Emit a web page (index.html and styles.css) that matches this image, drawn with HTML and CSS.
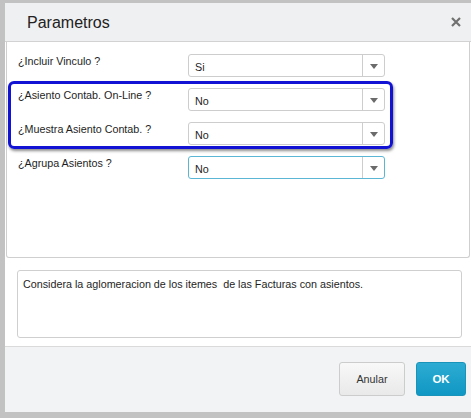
FILE: index.html
```html
<!DOCTYPE html>
<html lang="es">
<head>
<meta charset="utf-8">
<title>Parametros</title>
<link rel="stylesheet" href="styles.css">
</head>
<body>
<div class="dialog">
  <div class="header">
    <span class="title">Parametros</span>
    <svg class="close" width="10" height="10" viewBox="0 0 10 10"><path d="M1 1L9 9M9 1L1 9" stroke="#707070" stroke-width="2.2" fill="none"/></svg>
  </div>
  <div class="panel">
    <div class="row">
      <label class="label">¿Incluir Vinculo ?</label>
      <div class="select"><span class="value">Si</span><span class="arrow"><i class="tri"></i></span></div>
    </div>
    <div class="row">
      <label class="label">¿Asiento Contab. On-Line ?</label>
      <div class="select"><span class="value">No</span><span class="arrow"><i class="tri"></i></span></div>
    </div>
    <div class="row">
      <label class="label">¿Muestra Asiento Contab. ?</label>
      <div class="select"><span class="value">No</span><span class="arrow"><i class="tri"></i></span></div>
    </div>
    <div class="row">
      <label class="label">¿Agrupa Asientos ?</label>
      <div class="select focus"><span class="value">No</span><span class="arrow"><i class="tri"></i></span></div>
    </div>
    <div class="highlight"></div>
  </div>
  <div class="help">Considera la aglomeracion de los itemes&nbsp; de las Facturas con asientos.</div>
  <div class="footer">
    <button class="btn cancel">Anular</button>
    <button class="btn ok">OK</button>
  </div>
</div>
</body>
</html>
```

FILE: styles.css
```css
html, body {
  margin: 0;
  padding: 0;
}
body {
  background: #c2c2c2;
  font-family: "Liberation Sans", Arial, sans-serif;
  font-size: 10.75px;
  color: #1e1e1e;
  width: 471px;
  height: 418px;
  overflow: hidden;
}
.dialog {
  margin: 3px 0 0 5px;
  width: 466px;
  height: 409px;
  background: #fff;
  display: flex;
  flex-direction: column;
}
.header {
  height: 38px;
  flex: none;
  background: #eff0f1;
  border-bottom: 1px solid #d2d2d2;
  display: flex;
  align-items: center;
  padding-left: 22px;
  padding-right: 10px;
}
.title {
  font-size: 16px;
  color: #222;
  flex: 1;
  padding-top: 1px;
}
.close {
  margin-top: -1px;
}
.panel {
  position: relative;
  flex: none;
  height: 203px;
  margin: 0 1px;
  border: 1px solid #cfcfcf;
  border-top: none;
  border-radius: 0 0 3px 3px;
  padding: 12px 0 0 11px;
  display: flex;
  flex-direction: column;
  gap: 11px;
}
.row {
  display: flex;
  align-items: flex-start;
}
.label {
  width: 170px;
  flex: none;
  line-height: 14px;
  margin-top: 0;
}
.select {
  width: 195px;
  height: 21px;
  border: 1px solid #cdcdcd;
  border-radius: 3px;
  display: flex;
  align-items: center;
  background: #fff;
}
.select.focus {
  border-color: #5ab6d4;
}
.value {
  flex: 1;
  padding-left: 6px;
  padding-top: 2px;
}
.arrow {
  width: 21px;
  height: 21px;
  border-left: 1px solid #cdcdcd;
  display: flex;
  align-items: center;
  justify-content: center;
}
.tri {
  width: 0;
  height: 0;
  border-left: 4px solid transparent;
  border-right: 4px solid transparent;
  border-top: 5px solid #6b6b6b;
  margin-top: 1px;
}
.highlight {
  position: absolute;
  left: 1px;
  top: 39px;
  width: 379px;
  height: 62px;
  border: 3px solid #1212d4;
  border-radius: 6px;
  box-shadow: 1px 2px 3px rgba(0, 0, 0, 0.45);
  pointer-events: none;
}
.help {
  flex: none;
  margin: 12px 0 0 12px;
  width: 434px;
  height: 58px;
  border: 1px solid #cfcfcf;
  border-radius: 3px;
  padding: 6px 4px 2px 5px;
  line-height: 14px;
  white-space: nowrap;
}
.footer {
  flex: 1;
  margin-top: 8px;
  border-top: 1px solid #dadada;
  background: #f2f3f4;
  display: flex;
  justify-content: flex-end;
  align-items: flex-start;
  padding: 15px 5px 0 0;
  gap: 11px;
}
.btn {
  height: 34px;
  border-radius: 3px;
  font-family: "Liberation Sans", Arial, sans-serif;
  font-size: 10.75px;
  padding: 0;
  margin: 0;
}
.cancel {
  width: 66px;
  background: linear-gradient(#f8f8f8, #e9e9e9);
  border: 1px solid #cccccc;
  color: #333;
}
.ok {
  width: 50px;
  background: linear-gradient(#2cacd3, #1097c3);
  border: 1px solid #1a93bb;
  color: #fff;
  font-weight: bold;
  font-size: 11.5px;
}
```
